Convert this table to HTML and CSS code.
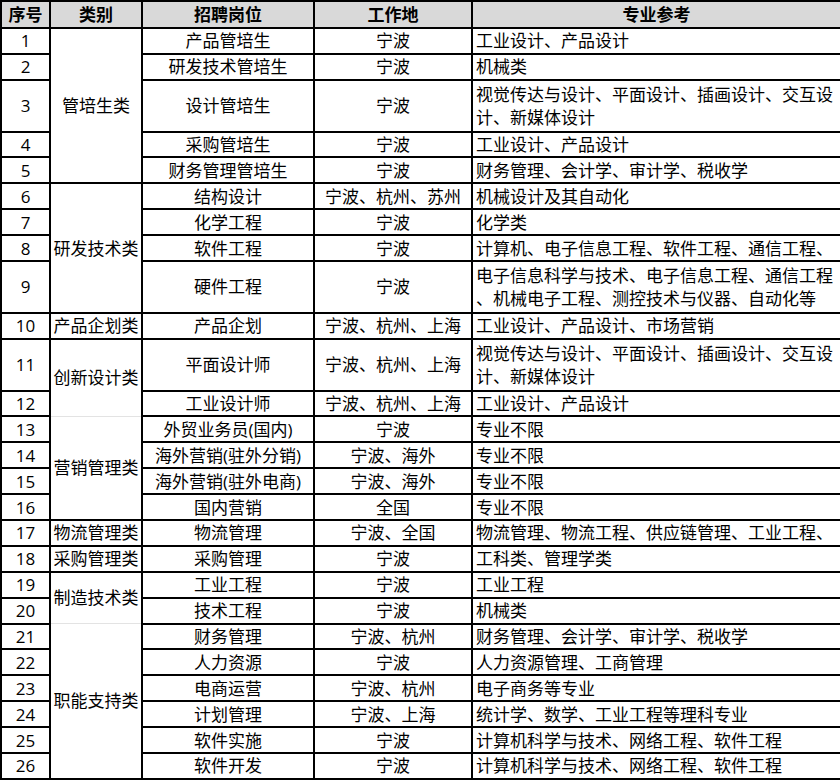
FILE: index.html
```html
<!DOCTYPE html>
<html lang="zh-CN">
<head>
<meta charset="utf-8">
<title>招聘岗位</title>
<link rel="stylesheet" href="styles.css">
</head>
<body>
<table class="jobs">
  <colgroup>
    <col class="c-no"><col class="c-cat"><col class="c-pos"><col class="c-loc"><col class="c-major">
  </colgroup>
  <thead>
    <tr class="head">
      <th>序号</th><th>类别</th><th>招聘岗位</th><th>工作地</th><th>专业参考</th>
    </tr>
  </thead>
  <tbody>
    <tr class="r"><td class="no">1</td><td class="cat" rowspan="5">管培生类</td><td class="pos">产品管培生</td><td class="loc">宁波</td><td class="major">工业设计、产品设计</td></tr>
    <tr class="r"><td class="no">2</td><td class="pos">研发技术管培生</td><td class="loc">宁波</td><td class="major">机械类</td></tr>
    <tr class="r2"><td class="no">3</td><td class="pos">设计管培生</td><td class="loc">宁波</td><td class="major">视觉传达与设计、平面设计、插画设计、交互设<br>计、新媒体设计</td></tr>
    <tr class="r"><td class="no">4</td><td class="pos">采购管培生</td><td class="loc">宁波</td><td class="major">工业设计、产品设计</td></tr>
    <tr class="r"><td class="no">5</td><td class="pos">财务管理管培生</td><td class="loc">宁波</td><td class="major">财务管理、会计学、审计学、税收学</td></tr>
    <tr class="r"><td class="no">6</td><td class="cat" rowspan="4">研发技术类</td><td class="pos">结构设计</td><td class="loc">宁波、杭州、苏州</td><td class="major">机械设计及其自动化</td></tr>
    <tr class="r"><td class="no">7</td><td class="pos">化学工程</td><td class="loc">宁波</td><td class="major">化学类</td></tr>
    <tr class="r"><td class="no">8</td><td class="pos">软件工程</td><td class="loc">宁波</td><td class="major">计算机、电子信息工程、软件工程、通信工程、</td></tr>
    <tr class="r2"><td class="no">9</td><td class="pos">硬件工程</td><td class="loc">宁波</td><td class="major">电子信息科学与技术、电子信息工程、通信工程<br>、机械电子工程、测控技术与仪器、自动化等</td></tr>
    <tr class="r"><td class="no">10</td><td class="cat">产品企划类</td><td class="pos">产品企划</td><td class="loc">宁波、杭州、上海</td><td class="major">工业设计、产品设计、市场营销</td></tr>
    <tr class="r2"><td class="no">11</td><td class="cat soft-bottom" rowspan="2">创新设计类</td><td class="pos">平面设计师</td><td class="loc">宁波、杭州、上海</td><td class="major">视觉传达与设计、平面设计、插画设计、交互设<br>计、新媒体设计</td></tr>
    <tr class="r"><td class="no">12</td><td class="pos">工业设计师</td><td class="loc">宁波、杭州、上海</td><td class="major">工业设计、产品设计</td></tr>
    <tr class="r"><td class="no">13</td><td class="cat soft-top" rowspan="4">营销管理类</td><td class="pos">外贸业务员(国内)</td><td class="loc">宁波</td><td class="major">专业不限</td></tr>
    <tr class="r"><td class="no">14</td><td class="pos">海外营销(驻外分销)</td><td class="loc">宁波、海外</td><td class="major">专业不限</td></tr>
    <tr class="r"><td class="no">15</td><td class="pos">海外营销(驻外电商)</td><td class="loc">宁波、海外</td><td class="major">专业不限</td></tr>
    <tr class="r"><td class="no">16</td><td class="pos">国内营销</td><td class="loc">全国</td><td class="major">专业不限</td></tr>
    <tr class="r"><td class="no">17</td><td class="cat">物流管理类</td><td class="pos">物流管理</td><td class="loc">宁波、全国</td><td class="major">物流管理、物流工程、供应链管理、工业工程、</td></tr>
    <tr class="r"><td class="no">18</td><td class="cat">采购管理类</td><td class="pos">采购管理</td><td class="loc">宁波</td><td class="major">工科类、管理学类</td></tr>
    <tr class="r"><td class="no">19</td><td class="cat soft-bottom" rowspan="2">制造技术类</td><td class="pos">工业工程</td><td class="loc">宁波</td><td class="major">工业工程</td></tr>
    <tr class="r"><td class="no">20</td><td class="pos">技术工程</td><td class="loc">宁波</td><td class="major">机械类</td></tr>
    <tr class="r"><td class="no">21</td><td class="cat soft-top" rowspan="6">职能支持类</td><td class="pos">财务管理</td><td class="loc">宁波、杭州</td><td class="major">财务管理、会计学、审计学、税收学</td></tr>
    <tr class="r"><td class="no">22</td><td class="pos">人力资源</td><td class="loc">宁波</td><td class="major">人力资源管理、工商管理</td></tr>
    <tr class="r"><td class="no">23</td><td class="pos">电商运营</td><td class="loc">宁波、杭州</td><td class="major">电子商务等专业</td></tr>
    <tr class="r"><td class="no">24</td><td class="pos">计划管理</td><td class="loc">宁波、上海</td><td class="major">统计学、数学、工业工程等理科专业</td></tr>
    <tr class="r"><td class="no">25</td><td class="pos">软件实施</td><td class="loc">宁波</td><td class="major">计算机科学与技术、网络工程、软件工程</td></tr>
    <tr class="r"><td class="no">26</td><td class="pos">软件开发</td><td class="loc">宁波</td><td class="major">计算机科学与技术、网络工程、软件工程</td></tr>
  </tbody>
</table>
</body>
</html>
```

FILE: styles.css
```css
html, body {
  margin: 0;
  padding: 0;
  background: #ffffff;
}

body {
  font-family: "Open Sans", "Noto Sans CJK SC", sans-serif;
  color: #000000;
}

.jobs {
  width: 840px;
  table-layout: fixed;
  border-collapse: collapse;
  font-size: 17px;
  line-height: 23px;
}

.c-no { width: 49px; }
.c-cat { width: 92px; }
.c-pos { width: 172px; }
.c-loc { width: 158px; }
.c-major { width: 369px; }

.jobs th,
.jobs td {
  border: 2px solid #000000;
  padding: 0 3px;
  vertical-align: middle;
  text-align: center;
  white-space: nowrap;
  overflow: hidden;
}

.jobs th {
  background: #d9d9d9;
  font-weight: 700;
}

.head { height: 27px; }
.r { height: 25.9px; }
.r2 { height: 51.8px; }

.jobs td.major {
  text-align: left;
  padding: 0 2px 0 3px;
  text-overflow: clip;
}

.jobs td.cat {
  padding: 0 2px;
}

.jobs td.soft-bottom {
  border-bottom: 1px solid #e3e3e3;
}

.jobs td.soft-top {
  border-top: 1px solid #e3e3e3;
}
```
